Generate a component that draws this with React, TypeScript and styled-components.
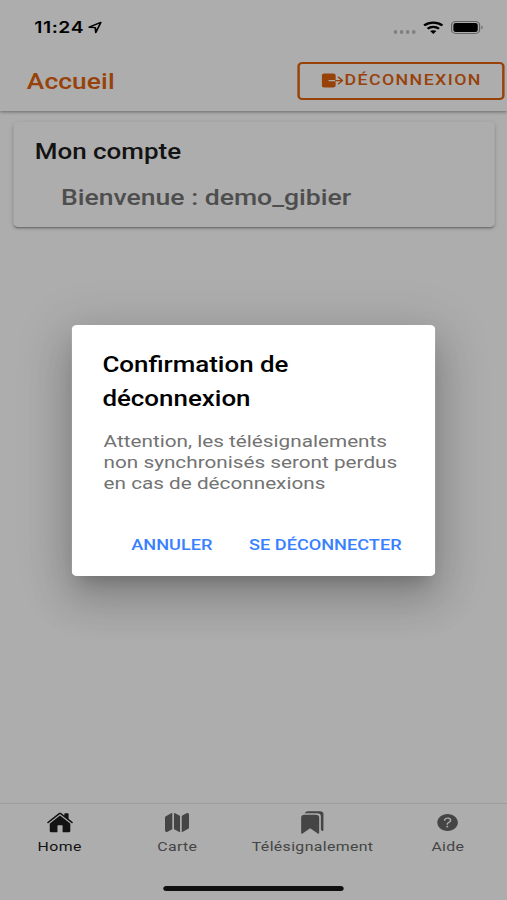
import React from "react";
import styled, { createGlobalStyle } from "styled-components";
import { IoBookmarks, IoHelpCircle, IoHome, IoMap } from "react-icons/io5";

const GlobalStyle = createGlobalStyle`
  *, *::before, *::after { box-sizing: border-box; }
  html, body { margin: 0; padding: 0; background: #adadad; }
  body { width: 507px; height: 900px; overflow: hidden; }
  button { font: inherit; border: 0; background: none; padding: 0; margin: 0; cursor: pointer; }
`;

/* The 416pt wide layout is widened to fill the 507px viewport. */
const Screen = styled.div`
  position: relative;
  display: flex;
  flex-direction: column;
  width: 416px;
  height: 900px;
  overflow: hidden;
  background: #fff;
  font-family: Roboto, "Liberation Sans", sans-serif;
  transform: scaleX(1.21875);
  transform-origin: 0 0;
`;

const StatusBar = styled.div`
  flex: none;
  display: flex;
  align-items: center;
  height: 54px;
  padding: 0 19px 0 28px;
  color: #000;
`;

const Clock = styled.span`
  font-family: Inter, Roboto, sans-serif;
  font-size: 15.8px;
  font-weight: 600;
  letter-spacing: 0.5px;
`;

const LocationIcon = styled.svg`
  width: 12px;
  height: 13px;
  margin-left: 3px;
`;

const StatusIcons = styled.div`
  display: flex;
  align-items: center;
  margin-left: auto;
`;

const SignalDots = styled.div`
  display: flex;
  gap: 1.8px;
  margin: 9px 6px 0 0;
  i {
    width: 3.2px;
    height: 4px;
    border-radius: 50%;
    background: #bdbdbd;
  }
`;

const WifiIcon = styled.svg`
  width: 17px;
  height: 13px;
  margin-right: 6px;
`;

const BatteryIcon = styled.svg`
  width: 27px;
  height: 13px;
`;

const Header = styled.header`
  flex: none;
  display: flex;
  align-items: center;
  justify-content: space-between;
  height: 57px;
  padding: 0 2px 3px 22px;
  box-shadow: 0 1px 3px rgba(0, 0, 0, 0.4);
  clip-path: inset(0 0 -6px 0);
`;

const Title = styled.h1`
  margin: 0;
  font-size: 21.6px;
  font-weight: 500;
  letter-spacing: 0.1px;
  color: #e0620f;
`;

const LogoutButton = styled.button`
  display: flex;
  align-items: center;
  justify-content: center;
  width: 170px;
  height: 38px;
  padding: 0 0 2px 1px;
  border: 2px solid #e0620f;
  border-radius: 4px;
  color: #e0620f;
  font-size: 14.6px;
  font-weight: 500;
  letter-spacing: 1.15px;
`;

const LogoutIcon = styled.svg`
  width: 18px;
  height: 15px;
  margin: 1px 1px 0 0;
`;

const Content = styled.main`
  flex: 1;
  padding: 11px 10px 0 11px;
`;

const Card = styled.section`
  height: 105px;
  padding: 15px 18px 15px 17.5px;
  border-radius: 4px;
  background: #fff;
  box-shadow: 0 3px 1px -2px rgba(0, 0, 0, 0.2), 0 2px 2px rgba(0, 0, 0, 0.14), 0 1px 5px rgba(0, 0, 0, 0.12);
`;

const CardTitle = styled.h2`
  margin: 0;
  font-size: 21.3px;
  line-height: 30px;
  font-weight: 500;
  color: #1c1c1c;
`;

const Welcome = styled.p`
  margin: 16px 0 0 21.500px;
  font-size: 21.8px;
  line-height: 30px;
  font-weight: 500;
  color: #737373;
`;

const TabBar = styled.nav`
  flex: none;
  display: grid;
  grid-template-columns: 97px 97px 125px 97px;
  height: 59px;
  border-top: 1px solid #e8e8e8;
`;

const Tab = styled.button<{ $active?: boolean }>`
  display: flex;
  flex-direction: column;
  align-items: center;
  padding: 6px 0 0 ${(p) => (p.$active ? "1px" : "0")};
  color: ${(p) => (p.$active ? "#1c1c1c" : "#666")};
  font-size: 13px;
  line-height: 16px;
  letter-spacing: ${(p) => (p.$active ? "0.4px" : "0.3px")};
  svg { width: 22.5px; height: 25px; margin-bottom: 4px; }
`;

const HomeArea = styled.div`
  flex: none;
  display: flex;
  justify-content: center;
  height: 38px;
  padding-top: 24px;
`;

const HomeIndicator = styled.div`
  width: 148px;
  height: 5px;
  border-radius: 3px;
  background: #181818;
`;

const Backdrop = styled.div`
  position: absolute;
  inset: 0;
  display: flex;
  align-items: center;
  justify-content: center;
  background: rgba(0, 0, 0, 0.32);
`;

const Dialog = styled.div`
  width: 298px;
  height: 251px;
  padding: 23px 24px 0 25px;
  border-radius: 4px;
  background: #fff;
  box-shadow: 0 11px 15px -7px rgba(0, 0, 0, 0.2), 0 24px 38px 3px rgba(0, 0, 0, 0.14),
    0 9px 46px 8px rgba(0, 0, 0, 0.12);
`;

const DialogTitle = styled.h2`
  margin: 0;
  font-size: 21.25px;
  line-height: 34px;
  font-weight: 500;
  color: #000;
`;

const DialogMessage = styled.p`
  margin: 15px 0 0 1px;
  font-size: 17px;
  line-height: 21.4px;
  color: #737373;
  white-space: nowrap;
`;

const DialogActions = styled.div`
  display: flex;
  justify-content: flex-end;
  gap: 30px;
  margin: 40.3px 3.5px 0 0;
`;

const DialogButton = styled.button`
  font-size: 14.9px;
  line-height: 20px;
  font-weight: 500;
  color: #3880ff;
`;

export default function App() {
  return (
    <>
      <GlobalStyle />
      <Screen>
        <StatusBar>
          <Clock>11:24</Clock>
          <LocationIcon viewBox="0 0 12 13">
            <path d="M1.2 6.2 10.7 1.4 6.6 11.6 6.2 6.6Z" fill="none" stroke="currentColor" strokeWidth="1.4" strokeLinejoin="round" />
          </LocationIcon>
          <StatusIcons>
            <SignalDots><i /><i /><i /><i /></SignalDots>
            <WifiIcon viewBox="0 0 17 13">
              <path d="M1 4.6C5.2.6 11.8.6 16 4.6M3.8 7.7c2.7-2.5 6.7-2.5 9.4 0" fill="none" stroke="currentColor" strokeWidth="2.1" />
              <path d="M5.9 10.1c1.5-1.3 3.7-1.3 5.2 0L8.5 13Z" fill="currentColor" />
            </WifiIcon>
            <BatteryIcon viewBox="0 0 27 13">
              <rect x=".5" y=".5" width="23" height="12" rx="3.4" fill="none" stroke="#929292" />
              <rect x="2" y="2" width="20" height="9" rx="2" fill="currentColor" />
              <path d="M25 4.6c1.4.6 1.4 3.2 0 3.8Z" fill="#929292" />
            </BatteryIcon>
          </StatusIcons>
        </StatusBar>
        <Header>
          <Title>Accueil</Title>
          <LogoutButton>
            <LogoutIcon viewBox="0 0 18 15">
              <path d="M2.2.5h7A2.2 2.2 0 0 1 11.4 2.7V6.9H5.6v1.3h5.8v4.1a2.2 2.2 0 0 1-2.2 2.2h-7A2.2 2.2 0 0 1 0 12.3V2.7A2.2 2.2 0 0 1 2.2.5Z" fill="currentColor" />
              <path d="M11.4 7.55H16.8M13.7 4.2 17 7.55 13.7 10.9" fill="none" stroke="currentColor" strokeWidth="1.3" strokeLinecap="round" strokeLinejoin="round" />
            </LogoutIcon>
            DÉCONNEXION
          </LogoutButton>
        </Header>
        <Content>
          <Card>
            <CardTitle>Mon compte</CardTitle>
            <Welcome>Bienvenue : demo_gibier</Welcome>
          </Card>
        </Content>
        <TabBar>
          <Tab $active><IoHome />Home</Tab>
          <Tab><IoMap />Carte</Tab>
          <Tab><IoBookmarks />Télésignalement</Tab>
          <Tab><IoHelpCircle />Aide</Tab>
        </TabBar>
        <HomeArea><HomeIndicator /></HomeArea>
        <Backdrop>
          <Dialog role="alertdialog">
            <DialogTitle>Confirmation de<br />déconnexion</DialogTitle>
            <DialogMessage>
              Attention, les télésignalements<br />non synchronisés seront perdus<br />en cas de déconnexions
            </DialogMessage>
            <DialogActions>
              <DialogButton>ANNULER</DialogButton>
              <DialogButton>SE DÉCONNECTER</DialogButton>
            </DialogActions>
          </Dialog>
        </Backdrop>
      </Screen>
    </>
  );
}
